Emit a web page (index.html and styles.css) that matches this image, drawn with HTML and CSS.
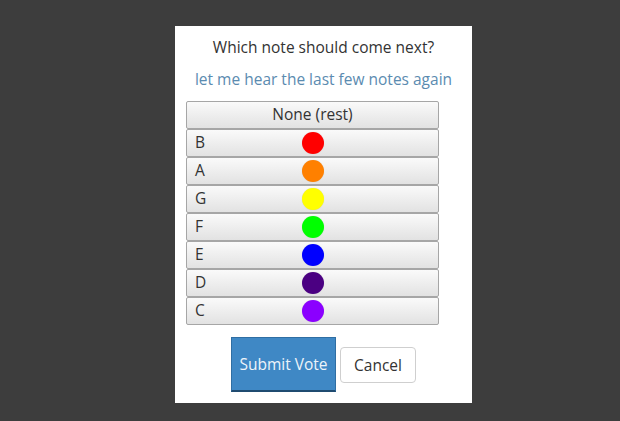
FILE: index.html
```html
<!DOCTYPE html>
<html lang="en">
<head>
<meta charset="utf-8">
<title>Next note vote</title>
<link rel="stylesheet" href="styles.css">
</head>
<body>
<div class="dialog">
  <p class="question">Which note should come next?</p>
  <a class="replay" href="#">let me hear the last few notes again</a>
  <div class="notes">
    <button class="note rest">None (rest)</button>
    <button class="note"><span class="label">B</span><span class="dot b"></span><span></span></button>
    <button class="note"><span class="label">A</span><span class="dot a"></span><span></span></button>
    <button class="note"><span class="label">G</span><span class="dot g"></span><span></span></button>
    <button class="note"><span class="label">F</span><span class="dot f"></span><span></span></button>
    <button class="note"><span class="label">E</span><span class="dot e"></span><span></span></button>
    <button class="note"><span class="label">D</span><span class="dot d"></span><span></span></button>
    <button class="note"><span class="label">C</span><span class="dot c"></span><span></span></button>
  </div>
  <div class="actions">
    <button class="submit">Submit Vote</button>
    <button class="cancel">Cancel</button>
  </div>
</div>
</body>
</html>
```

FILE: styles.css
```css
* {
  box-sizing: border-box;
}

html, body {
  margin: 0;
  height: 100%;
}

body {
  background: #3d3d3d;
  font-family: "Open Sans", "DejaVu Sans", sans-serif;
  color: #333;
  font-size: 15.5px;
  padding: 26px 0 0 175px;
}

.dialog {
  width: 297px;
  height: 377px;
  background: #fff;
  padding: 11px 0 0 11px;
  display: flex;
  flex-direction: column;
}

.question {
  margin: 0 0 0 -11px;
  text-align: center;
  line-height: 20px;
}

.replay {
  margin: 12px 0 0 -11px;
  text-align: center;
  line-height: 20px;
  color: #5b8bb0;
  text-decoration: none;
}

.notes {
  margin-top: 12px;
  width: 253px;
  display: flex;
  flex-direction: column;
}

.note {
  height: 28px;
  margin: 0;
  padding: 0 0 2px 0;
  border: 1px solid #a6a6a6;
  border-radius: 2px;
  background: linear-gradient(#fafafa, #e2e2e2);
  font: inherit;
  color: #333;
  display: grid;
  grid-template-columns: 1fr 22px 1fr;
  align-items: center;
  text-align: left;
}

.label {
  padding-left: 8px;
}

.note.rest {
  display: block;
  text-align: center;
  padding: 0 0 2px;
}

.dot {
  width: 22px;
  height: 22px;
  margin-top: 2px;
  border-radius: 50%;
  box-shadow: 0 0 1px 0 rgba(0, 0, 0, 0.15);
}

.dot.b { background: #ff0000; }
.dot.a { background: #ff8000; }
.dot.g { background: #ffff00; }
.dot.f { background: #00ff00; }
.dot.e { background: #0000ff; }
.dot.d { background: #4b0082; }
.dot.c { background: #8b00ff; }

.actions {
  margin: 12px 0 0 -11px;
  display: flex;
  justify-content: center;
  align-items: center;
  gap: 4px;
}

.submit {
  width: 105px;
  height: 55px;
  background: #3f88c5;
  border: 1px solid #2f6ea3;
  border-bottom: 2px solid #1f4b70;
  border-radius: 0;
  color: #eef4fa;
  font: inherit;
  padding: 0;
}

.cancel {
  width: 76px;
  height: 36px;
  background: #fff;
  border: 1px solid #cfcfcf;
  border-radius: 4px;
  color: #333;
  font: inherit;
  padding: 0;
}
```
